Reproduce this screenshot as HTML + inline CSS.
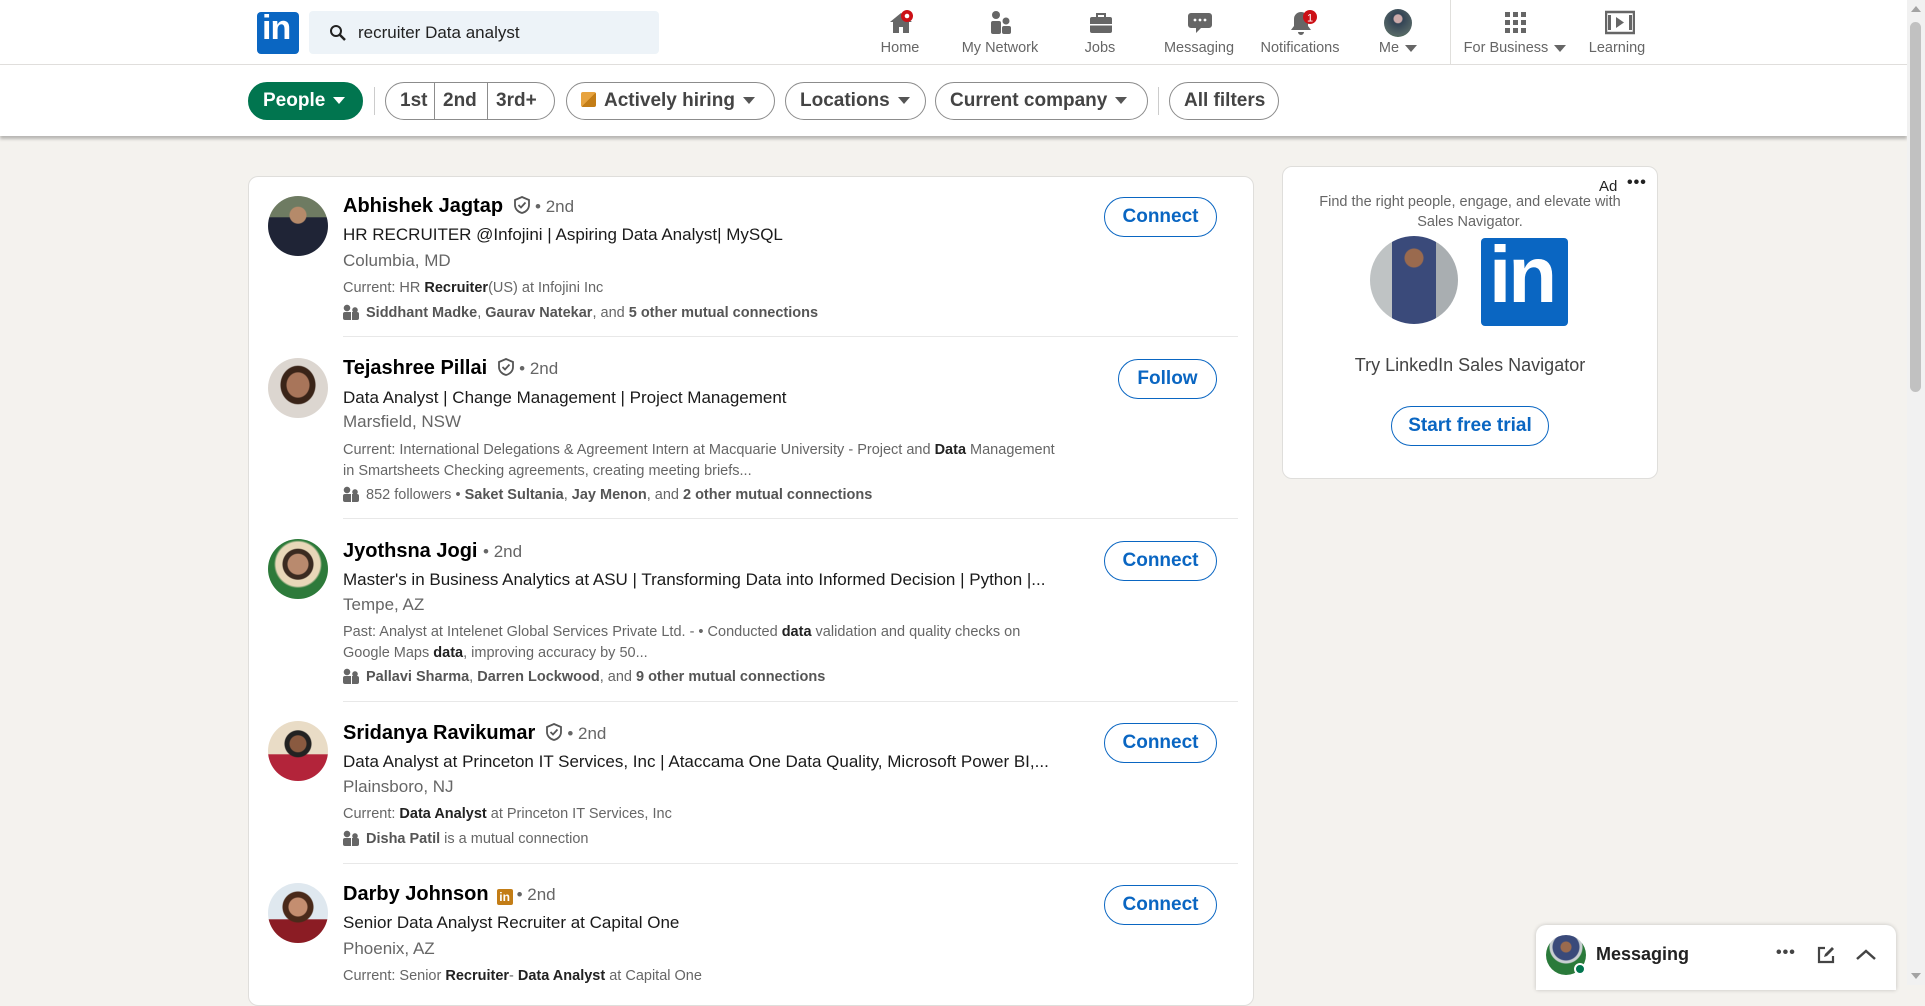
<!DOCTYPE html>
<html><head><meta charset="utf-8"><style>
*{box-sizing:border-box;margin:0;padding:0}
body{width:1925px;height:985px;overflow:hidden;background:#f4f2ee;font-family:"Liberation Sans",sans-serif;position:relative;color:rgba(0,0,0,.9)}
.a{position:absolute;white-space:nowrap}
.nav{position:absolute;left:0;top:0;width:1907px;height:65px;background:#fff;border-bottom:1px solid #e0dfdc}
.ni{position:absolute;top:0;width:100px;height:65px;text-align:center;font-size:14.5px;color:#666;white-space:nowrap}
.ni span{position:absolute;left:-20px;right:-20px;top:40px}
.ni svg{position:absolute;left:38px;top:10px}
.fb{position:absolute;left:0;top:65px;width:1907px;height:71px;background:#fff;box-shadow:0 3px 3px rgba(0,0,0,.25)}
.pill{position:absolute;top:17px;height:38px;border:1px solid #8c8c8c;border-radius:19px;font-size:19px;font-weight:600;color:#444;line-height:36px;padding:0 14px;white-space:nowrap}
.caret{display:inline-block;width:0;height:0;border-left:6px solid transparent;border-right:6px solid transparent;border-top:7px solid #555;vertical-align:middle;margin-left:8px}
.card{position:absolute;background:#fff;border:1px solid #dfdedb;border-radius:10px}
.nm{font-size:20px;font-weight:600;color:#000}
.dg{font-size:17px;color:#666;font-weight:400}
.hl{font-size:17px;color:#1a1a1a}
.lo{font-size:17px;color:#666}
.cu{font-size:14.5px;color:#666;line-height:21px;white-space:normal;width:715px}
.cu b{color:#222}
.mu{font-size:14.5px;color:#666}
.mu b{color:#555}
.btn{position:absolute;height:40px;border:1.5px solid #0a66c2;border-radius:20px;color:#0a66c2;font-size:19px;font-weight:600;text-align:center;line-height:37px}
.av{position:absolute;width:60px;height:60px;border-radius:50%}
.hr{position:absolute;left:343px;width:895px;height:1px;background:#e8e8e8}
.sh{display:inline-block;vertical-align:-2px;margin:0 4px 0 10px}
.mi{display:inline-block;width:17px;height:16px;vertical-align:-3px;margin-right:6px;background:radial-gradient(circle at 4px 4px,#666 3px,transparent 3.5px),radial-gradient(circle at 12px 6px,#666 2.5px,transparent 3px);position:relative}
.mi:after{content:"";position:absolute;left:0;top:8px;width:16px;height:8px;background:linear-gradient(90deg,#666 8px,transparent 8px,transparent 9px,#666 9px);border-radius:2px}
</style></head><body>
<div class="nav">
 <div class="a" style="left:257px;top:12px;width:42px;height:42px;background:#0a66c2;border-radius:4px"></div>
 <div class="a" style="left:262px;top:9px;font-size:34px;font-weight:700;color:#fff;letter-spacing:-1px">in</div>
 <div class="a" style="left:309px;top:11px;width:350px;height:43px;background:#edf3f8;border-radius:4px"></div>
 <svg class="a" style="left:329px;top:24px" width="18" height="18" viewBox="0 0 18 18"><circle cx="7" cy="7" r="5" fill="none" stroke="#222" stroke-width="2"/><path d="M11 11l5 5" stroke="#222" stroke-width="2.5"/></svg>
 <div class="a" style="left:358px;top:23px;font-size:17px;color:#222">recruiter Data analyst</div>
 <div class="ni" style="left:850px"><svg width="26" height="26" viewBox="0 0 26 26"><path d="M13 3L2 12h3v11h6v-6h4v6h6V12h3z" fill="#666"/><circle cx="19" cy="6" r="6" fill="#cc1016"/><circle cx="19" cy="6" r="2.3" fill="#fff"/></svg><span>Home</span></div>
 <div class="ni" style="left:950px"><svg width="26" height="26" viewBox="0 0 26 26"><circle cx="8" cy="5" r="4" fill="#666"/><rect x="3" y="11" width="10" height="13" rx="2" fill="#666"/><circle cx="18" cy="11" r="3.5" fill="#666"/><rect x="14" y="16" width="9" height="8" rx="2" fill="#666"/></svg><span>My Network</span></div>
 <div class="ni" style="left:1050px"><svg width="26" height="26" viewBox="0 0 26 26"><rect x="2" y="7" width="22" height="16" rx="2" fill="#666"/><path d="M9 7V4h8v3" stroke="#666" stroke-width="2" fill="none"/><rect x="2" y="14" width="22" height="1.5" fill="#fff"/></svg><span>Jobs</span></div>
 <div class="ni" style="left:1149px"><svg width="26" height="26" viewBox="0 0 26 26"><path d="M4 3h18a3 3 0 013 3v9a3 3 0 01-3 3h-8l-5 5v-5H4a3 3 0 01-3-3V6a3 3 0 013-3z" fill="#666"/><circle cx="8" cy="10" r="1.4" fill="#fff"/><circle cx="13" cy="10" r="1.4" fill="#fff"/><circle cx="18" cy="10" r="1.4" fill="#fff"/></svg><span>Messaging</span></div>
 <div class="ni" style="left:1250px"><svg width="30" height="26" viewBox="0 0 30 26"><path d="M13 2a7 7 0 00-7 7v7l-3 4h20l-3-4V9a7 7 0 00-7-7zM10 22a3 3 0 006 0z" fill="#666"/><circle cx="22" cy="7" r="7" fill="#cc1016"/><text x="22" y="11.5" font-size="11" fill="#fff" text-anchor="middle" font-family="Liberation Sans">1</text></svg><span>Notifications</span></div>
 <div class="ni" style="left:1348px"><div class="a" style="left:36px;top:9px;width:28px;height:28px;border-radius:50%;background:radial-gradient(circle at 50% 35%,#caa 0 4px,#345 5px,#566 70%,#3a6b3a 100%)"></div><span>Me <i class="caret" style="margin-left:2px;border-top-color:#666"></i></span></div>
 <div class="a" style="left:1450px;top:0;width:1px;height:65px;background:#e0dfdc"></div>
 <div class="ni" style="left:1465px"><svg width="26" height="26" viewBox="0 0 26 26" fill="#666"><rect x="2" y="2" width="5" height="5"/><rect x="10" y="2" width="5" height="5"/><rect x="18" y="2" width="5" height="5"/><rect x="2" y="10" width="5" height="5"/><rect x="10" y="10" width="5" height="5"/><rect x="18" y="10" width="5" height="5"/><rect x="2" y="18" width="5" height="5"/><rect x="10" y="18" width="5" height="5"/><rect x="18" y="18" width="5" height="5"/></svg><span>For Business <i class="caret" style="margin-left:2px;border-top-color:#666"></i></span></div>
 <div class="ni" style="left:1567px"><svg width="30" height="26" viewBox="0 0 30 26"><rect x="1" y="2" width="28" height="21" fill="none" stroke="#666" stroke-width="2.5"/><path d="M11 7l8 5.5-8 5.5z" fill="#666"/><rect x="3" y="5" width="3" height="15" fill="#666"/><rect x="24" y="5" width="3" height="15" fill="#666"/></svg><span>Learning</span></div>
</div>
<div class="fb">
 <div class="pill" style="left:248px;width:115px;background:#01754f;border-color:#01754f;color:#fff">People<i class="caret" style="border-top-color:#fff"></i></div>
 <div class="a" style="left:374px;top:22px;width:1px;height:28px;background:#ccc"></div>
 <div class="pill" style="left:385px;width:170px;padding:0">
   <span class="a" style="left:14px">1st</span><span class="a" style="left:48px;top:0;width:1px;height:36px;background:#8c8c8c"></span><span class="a" style="left:57px">2nd</span><span class="a" style="left:101px;top:0;width:1px;height:36px;background:#8c8c8c"></span><span class="a" style="left:110px">3rd+</span></div>
 <div class="pill" style="left:566px;width:209px"><span style="display:inline-block;width:15px;height:15px;border-radius:2px;vertical-align:-1px;margin-right:8px;background:linear-gradient(135deg,#e7a33e 50%,#c37d16 50%)"></span>Actively hiring<i class="caret"></i></div>
 <div class="pill" style="left:785px;width:141px">Locations<i class="caret"></i></div>
 <div class="pill" style="left:935px;width:213px">Current company<i class="caret"></i></div>
 <div class="a" style="left:1158px;top:22px;width:1px;height:28px;background:#ccc"></div>
 <div class="pill" style="left:1169px;width:110px">All filters</div>
</div>

<div class="card" style="left:248px;top:176px;width:1006px;height:830px"></div>
<!-- row1 -->
<div class="av" style="left:268px;top:196px;background:radial-gradient(circle at 50% 32%,#b58a6a 0 8px,transparent 9px),linear-gradient(180deg,#6e7b62 0 35%,#1f2436 36%)"></div>
<div class="a nm" style="left:343px;top:195px">Abhishek Jagtap<svg class="sh" width="18" height="18" viewBox="0 0 18 18"><path d="M9 1l7 3v5c0 4-3 7-7 8-4-1-7-4-7-8V4z" fill="none" stroke="#555" stroke-width="1.8"/><path d="M5.5 9l2.5 2.5 4.5-5" fill="none" stroke="#555" stroke-width="1.8"/></svg><span class="dg">• 2nd</span></div>
<div class="a hl" style="left:343px;top:225px">HR RECRUITER @Infojini | Aspiring Data Analyst| MySQL</div>
<div class="a lo" style="left:343px;top:251px">Columbia, MD</div>
<div class="a cu" style="left:343px;top:278px">Current: HR <b>Recruiter</b>(US) at Infojini Inc</div>
<div class="a mu" style="left:343px;top:304px"><i class="mi"></i><b>Siddhant Madke</b>, <b>Gaurav Natekar</b>, and <b>5 other mutual connections</b></div>
<div class="btn" style="left:1104px;top:197px;width:113px">Connect</div>
<div class="hr" style="top:336px"></div>
<!-- row2 -->
<div class="av" style="left:268px;top:358px;background:radial-gradient(ellipse at 50% 45%,#a8755a 0 11px,#3a2418 12px 17px,#dcd6d0 18px)"></div>
<div class="a nm" style="left:343px;top:357px">Tejashree Pillai<svg class="sh" width="18" height="18" viewBox="0 0 18 18"><path d="M9 1l7 3v5c0 4-3 7-7 8-4-1-7-4-7-8V4z" fill="none" stroke="#555" stroke-width="1.8"/><path d="M5.5 9l2.5 2.5 4.5-5" fill="none" stroke="#555" stroke-width="1.8"/></svg><span class="dg">• 2nd</span></div>
<div class="a hl" style="left:343px;top:388px">Data Analyst | Change Management | Project Management</div>
<div class="a lo" style="left:343px;top:412px">Marsfield, NSW</div>
<div class="a cu" style="left:343px;top:440px">Current: International Delegations &amp; Agreement Intern at Macquarie University - Project and <b>Data</b> Management in Smartsheets Checking agreements, creating meeting briefs...</div>
<div class="a mu" style="left:343px;top:486px"><i class="mi"></i>852 followers • <b>Saket Sultania</b>, <b>Jay Menon</b>, and <b>2 other mutual connections</b></div>
<div class="btn" style="left:1118px;top:359px;width:99px">Follow</div>
<div class="hr" style="top:518px"></div>
<!-- row3 -->
<div class="av" style="left:268px;top:539px;background:radial-gradient(circle at 50% 42%,#b98a6e 0 10px,#3a2a20 11px 15px,#e8d7b8 16px 22px,#2d7a3a 24px)"></div>
<div class="a nm" style="left:343px;top:540px">Jyothsna Jogi <span class="dg">• 2nd</span></div>
<div class="a hl" style="left:343px;top:570px">Master's in Business Analytics at ASU | Transforming Data into Informed Decision | Python |...</div>
<div class="a lo" style="left:343px;top:595px">Tempe, AZ</div>
<div class="a cu" style="left:343px;top:622px">Past: Analyst at Intelenet Global Services Private Ltd. - • Conducted <b>data</b> validation and quality checks on Google Maps <b>data</b>, improving accuracy by 50...</div>
<div class="a mu" style="left:343px;top:668px"><i class="mi"></i><b>Pallavi Sharma</b>, <b>Darren Lockwood</b>, and <b>9 other mutual connections</b></div>
<div class="btn" style="left:1104px;top:541px;width:113px">Connect</div>
<div class="hr" style="top:701px"></div>
<!-- row4 -->
<div class="av" style="left:268px;top:721px;background:radial-gradient(circle at 50% 38%,#8a5a40 0 8px,#222 9px 13px,transparent 14px),linear-gradient(180deg,#e9dcc6 0 55%,#b3243a 56%)"></div>
<div class="a nm" style="left:343px;top:722px">Sridanya Ravikumar<svg class="sh" width="18" height="18" viewBox="0 0 18 18"><path d="M9 1l7 3v5c0 4-3 7-7 8-4-1-7-4-7-8V4z" fill="none" stroke="#555" stroke-width="1.8"/><path d="M5.5 9l2.5 2.5 4.5-5" fill="none" stroke="#555" stroke-width="1.8"/></svg><span class="dg">• 2nd</span></div>
<div class="a hl" style="left:343px;top:752px">Data Analyst at Princeton IT Services, Inc | Ataccama One Data Quality, Microsoft Power BI,...</div>
<div class="a lo" style="left:343px;top:777px">Plainsboro, NJ</div>
<div class="a cu" style="left:343px;top:804px">Current: <b>Data Analyst</b> at Princeton IT Services, Inc</div>
<div class="a mu" style="left:343px;top:830px"><i class="mi"></i><b>Disha Patil</b> is a mutual connection</div>
<div class="btn" style="left:1104px;top:723px;width:113px">Connect</div>
<div class="hr" style="top:863px"></div>
<!-- row5 -->
<div class="av" style="left:268px;top:883px;background:radial-gradient(circle at 50% 40%,#c48e70 0 9px,#4a2a1a 10px 15px,transparent 16px),linear-gradient(180deg,#dfe8ef 0 60%,#8b1c24 61%)"></div>
<div class="a nm" style="left:343px;top:883px">Darby Johnson<span style="display:inline-block;width:16px;height:16px;background:#c37d16;border-radius:2px;margin:0 4px 0 8px;vertical-align:-1px;color:#fff;font-size:12px;line-height:16px;text-align:center;font-weight:700">in</span><span class="dg">• 2nd</span></div>
<div class="a hl" style="left:343px;top:913px">Senior Data Analyst Recruiter at Capital One</div>
<div class="a lo" style="left:343px;top:939px">Phoenix, AZ</div>
<div class="a cu" style="left:343px;top:966px">Current: Senior <b>Recruiter</b>- <b>Data Analyst</b> at Capital One</div>
<div class="btn" style="left:1104px;top:885px;width:113px">Connect</div>

<!-- ad -->
<div class="card" style="left:1282px;top:166px;width:376px;height:313px"></div>
<div class="a" style="left:1599px;top:178px;font-size:15px;color:#222">Ad</div>
<div class="a" style="left:1627px;top:174px;font-size:16px;font-weight:700;color:#222;letter-spacing:1px">•••</div>
<div class="a" style="left:1282px;width:376px;top:192px;text-align:center;font-size:14.5px;color:#666;line-height:20px;white-space:normal;padding:0 20px">Find the right people, engage, and elevate with Sales Navigator.</div>
<div class="a" style="left:1370px;top:236px;width:88px;height:88px;border-radius:50%;background:radial-gradient(circle at 50% 25%,#9a6a4e 0 9px,transparent 10px),linear-gradient(90deg,#bfc3c4 0 25%,#3a4a7a 25% 75%,#a9aeb1 75%)"></div>
<div class="a" style="left:1481px;top:238px;width:87px;height:88px;background:#0a66c2;border-radius:4px"></div>
<div class="a" style="left:1489px;top:229px;font-size:80px;font-weight:700;color:#fff;letter-spacing:-3px">in</div>
<div class="a" style="left:1282px;width:376px;top:355px;text-align:center;font-size:18px;color:#444">Try LinkedIn Sales Navigator</div>
<div class="btn" style="left:1391px;top:406px;width:158px">Start free trial</div>

<!-- messaging -->
<div class="a" style="left:1536px;top:925px;width:360px;height:65px;background:#fff;border-radius:10px 10px 0 0;box-shadow:0 0 4px rgba(0,0,0,.2)"></div>
<div class="a" style="left:1546px;top:935px;width:40px;height:40px;border-radius:50%;background:radial-gradient(circle at 50% 30%,#9a6a4e 0 5px,#3a4a7a 6px 13px,#c9cfd2 14px 16px,#2a7a3a 17px)"></div>
<div class="a" style="left:1574px;top:963px;width:12px;height:12px;border-radius:50%;background:#01754f;border:2px solid #fff"></div>
<div class="a" style="left:1596px;top:944px;font-size:18px;font-weight:600;color:#222">Messaging</div>
<div class="a" style="left:1776px;top:944px;font-size:16px;font-weight:700;color:#444;letter-spacing:1px">•••</div>
<svg class="a" style="left:1816px;top:945px" width="20" height="20" viewBox="0 0 20 20"><path d="M9 3H3v14h14v-6" fill="none" stroke="#444" stroke-width="2.2"/><path d="M8 12l1-3 7-7 2 2-7 7z" fill="#444"/></svg>
<svg class="a" style="left:1855px;top:947px" width="22" height="14" viewBox="0 0 22 14"><path d="M2 12l9-8 9 8" fill="none" stroke="#444" stroke-width="2.5"/></svg>

<!-- scrollbar -->
<div class="a" style="left:1907px;top:0;width:18px;height:985px;background:#f1f1f1"></div>
<div class="a" style="left:1910px;top:22px;width:11px;height:370px;background:#c1c1c1;border-radius:6px"></div>
<div class="a" style="left:1911px;top:6px;border-left:5px solid transparent;border-right:5px solid transparent;border-bottom:6px solid #a3a3a3"></div>
<div class="a" style="left:1911px;top:973px;border-left:5px solid transparent;border-right:5px solid transparent;border-top:6px solid #a3a3a3"></div>
</body></html>
